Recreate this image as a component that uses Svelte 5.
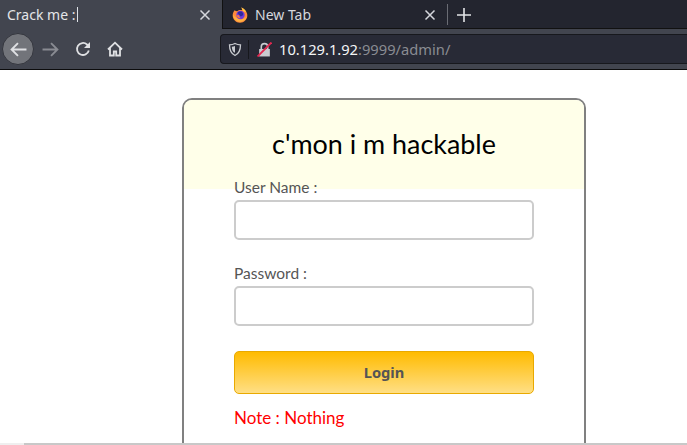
<script lang="ts">
  let username = $state('');
  let password = $state('');
</script>

<div class="window">
  <div class="tabstrip">
    <div class="tab active">
      <span class="tab-title">Crack me :<i class="caret"></i></span>
      <svg class="close" viewBox="0 0 12 12" width="12" height="12"><path d="M1.500 1.500l9 9M10.500 1.500l-9 9" /></svg>
    </div>
    <div class="tab idle">
      <svg class="fox" viewBox="0 0 16 16" width="16" height="16">
        <path d="M2.600 3.200C1.300 4.700.7 6.500.7 8.500c0 4 3.200 7.200 7.300 7.200s7.300-3.200 7.300-7.200c0-1.500-.5-3-1.400-4.200C12.800 2.200 11 1 9.300.4c.7 1 .9 2 .7 2.800C8.500 2.700 6.500 3 5.200 4.200 4.300 4 3.300 3.800 2.600 3.200z" fill="#ff8a3c" />
        <path d="M.9 7.500c.3 4 3.300 7.300 7.100 7.300 3.400 0 6-2.300 6.800-5.500-1.200 2-3.300 3.100-5.500 3-3.400-.1-6.500-2-8.400-4.800z" fill="#ffb23f" />
        <path d="M9.300.4c2.300.8 4 2.300 5 4.300l-2.800-.3C11 3 10 1.500 9.300.4z" fill="#ffcb45" />
        <circle cx="8.500" cy="8" r="4.200" fill="#6e3bd8" />
        <path d="M5.500 6c1.100-1.400 3.100-1.800 4.500-1 1.200.7 1.500 2.200.8 3.300-.6.800-1.800 1.100-2.700.7L5.500 6z" fill="#2f2a9e" />
        <path d="M4.300 7.500c1.200.9 2.300.9 3.100.7-.3 1.100.3 2.500 1.500 2.900-2 .4-4.300-1.200-4.600-3.600z" fill="#ff7a3c" />
      </svg>
      <span class="tab-title">New Tab</span>
      <svg class="close" viewBox="0 0 12 12" width="12" height="12"><path d="M1.500 1.500l9 9M10.500 1.500l-9 9" /></svg>
    </div>
    <div class="divider"></div>
    <svg class="plus" viewBox="0 0 14 14" width="14" height="14"><path d="M7 0v14M0 7h14" /></svg>
  </div>

  <div class="toolbar">
    <div class="nav">
      <button class="back" aria-label="Back">
        <svg viewBox="0 0 16 16" width="17" height="17"><path d="M1.500 8h14M7.500 2L1.500 8l6 6" /></svg>
      </button>
      <svg class="forward" viewBox="0 0 16 16" width="17" height="17"><path d="M.5 8h14M8.500 2l6 6-6 6" /></svg>
      <svg class="reload" viewBox="0 0 16 16" width="16" height="16"><path d="M13.800 9.500A6 6 0 1 1 12 3.500l2 2" /><path class="fill" d="M15 1v6H9z" /></svg>
      <svg class="home" viewBox="0 0 16 16" width="16" height="16"><path d="M1 8.500l7-6.800 7 6.800M3 6.500v8h3.800v-4h2.400v4H13v-8" /></svg>
    </div>
    <div class="urlbar">
      <svg class="shield" viewBox="0 0 14 14" width="14" height="15"><path d="M7 1c2 1 3.500 1.300 5.500 1.300 0 5-1 8.700-5.500 10.700C2.500 11 1.500 7.300 1.500 2.300 3.500 2.300 5 2 7 1z" /><path class="half" d="M7 3.500v6.800C5 9.200 4 7.500 3.800 4.200 5 4.200 6 4 7 3.500z" /></svg>
      <span class="sep"></span>
      <svg class="lock" viewBox="0 0 14 14" width="15" height="15">
        <path class="body" d="M2 6.500h10v7H2z" />
        <path class="shackle" d="M4 6.500V4.500a3 3 0 0 1 6 0v2" />
        <path class="slash" d="M.5 13.500L13.500.5" />
      </svg>
      <span class="url"><b>10.129.1.92</b>:9999/admin/</span>
    </div>
  </div>

  <main class="page">
    <form class="card" onsubmit={(e) => e.preventDefault()}>
      <h1 class="head">c'mon i m hackable</h1>
      <div class="body">
        <label for="user">User Name :</label>
        <input id="user" type="text" bind:value={username} />
        <label class="second" for="pass">Password :</label>
        <input id="pass" type="password" bind:value={password} />
        <button type="submit" class="login">Login</button>
        <p class="note">Note : Nothing</p>
      </div>
    </form>
  </main>
  <div class="scrollbar"><span></span></div>
</div>

<style>
  :global(body) {
    margin: 0;
    background: #fff;
  }

  .window {
    width: 687px;
    height: 445px;
    overflow: hidden;
    display: flex;
    flex-direction: column;
    font-family: Lato, "Open Sans", sans-serif;
  }

  .tabstrip {
    height: 29px;
    flex: none;
    display: flex;
    align-items: center;
    background: linear-gradient(#23252f 28px, #111 28px);
    font-family: "Noto Sans", sans-serif;
    font-size: 14px;
  }

  .tab {
    height: 29px;
    box-sizing: border-box;
    display: flex;
    align-items: center;
  }

  .tab.active {
    width: 222px;
    padding: 0 11px 0 7px;
    background: #42454f;
    color: #e4e5e8;
  }

  .tab.idle {
    width: 225px;
    padding: 0 11px 0 9px;
    color: #d5d7dc;
    border-left: 1px solid #111;
  }

  .tab-title {
    flex: 1;
  }

  .caret {
    display: inline-block;
    width: 1px;
    height: 15px;
    margin-left: 2px;
    vertical-align: -2px;
    background: #dfe3e8;
  }

  .close path {
    fill: none;
    stroke: #d5d7dc;
    stroke-width: 1.500;
  }

  .fox {
    margin-right: 7px;
  }

  .divider {
    width: 1px;
    height: 21px;
    background: #6a6c74;
  }

  .plus {
    margin-left: 9px;
  }

  .plus path {
    fill: none;
    stroke: #e4e5e8;
    stroke-width: 1.600;
  }

  .toolbar {
    height: 41px;
    flex: none;
    box-sizing: border-box;
    display: flex;
    align-items: center;
    background: #42454f;
    border-bottom: 1px solid #0c0c0d;
    padding-left: 2px;
  }

  .nav {
    width: 218px;
    display: flex;
    align-items: center;
  }

  .back {
    width: 32px;
    height: 32px;
    padding: 0;
    display: flex;
    align-items: center;
    justify-content: center;
    background: #72747a;
    border: 1px solid #34363e;
    border-radius: 50%;
  }

  .nav svg path {
    fill: none;
    stroke: #dfe0e3;
    stroke-width: 1.800;
  }

  .forward {
    margin-left: 8px;
    opacity: 0.45;
  }

  .reload {
    margin-left: 16px;
  }

  .nav .reload path.fill {
    fill: #dfe0e3;
    stroke: none;
  }

  .home {
    margin-left: 16px;
  }

  .urlbar {
    flex: 1;
    height: 30px;
    box-sizing: border-box;
    display: flex;
    align-items: center;
    padding-left: 7px;
    background: #282a36;
    border: 1px solid #17181d;
    border-right: 0;
    border-radius: 4px 0 0 4px;
    font-family: "Noto Sans", sans-serif;
    font-size: 14.700px;
    color: #8a8c92;
  }

  .shield path {
    fill: none;
    stroke: #c9cbd0;
    stroke-width: 1.300;
  }

  .shield path.half {
    fill: #c9cbd0;
    stroke: none;
  }

  .sep {
    width: 1px;
    height: 19px;
    margin: 0 8px 0 6px;
    background: #17181d;
  }

  .lock .body {
    fill: #c9cbd0;
  }

  .lock .shackle {
    fill: none;
    stroke: #c9cbd0;
    stroke-width: 1.500;
  }

  .lock .slash {
    fill: none;
    stroke: #e22850;
    stroke-width: 1.800;
  }

  .url {
    margin-left: 7px;
  }

  .url b {
    font-weight: 400;
    color: #f4f5f6;
  }

  .page {
    flex: 1;
    min-height: 0;
    padding: 28px 0 0 182px;
    overflow: hidden;
  }

  .card {
    width: 404px;
    height: 420px;
    box-sizing: border-box;
    border: 2px solid #808080;
    border-radius: 10px;
    overflow: hidden;
  }

  .head {
    height: 89px;
    margin: 0;
    padding-top: 28px;
    box-sizing: border-box;
    background: #ffffe9;
    font-size: 26.900px;
    font-weight: 400;
    line-height: 32px;
    text-align: center;
    color: #000;
  }

  .body {
    display: flex;
    flex-direction: column;
    padding: 0 50px;
    margin-top: -12px;
  }

  label {
    font-size: 15.500px;
    line-height: 20px;
    color: #555;
    position: relative;
  }

  .second {
    margin-top: 23px;
  }

  input {
    height: 40px;
    box-sizing: border-box;
    margin-top: 3px;
    background: #fff;
    border: 2px solid #ccc;
    border-radius: 5px;
  }

  .login {
    height: 43px;
    margin-top: 25px;
    padding-bottom: 3px;
    background: linear-gradient(#ffbb00, #ffdf85);
    border: 1px solid #e9a900;
    border-radius: 5px;
    font-family: "Noto Sans", sans-serif;
    font-size: 14.700px;
    font-weight: 700;
    color: #555;
  }

  .note {
    margin: 13px 0 0;
    font-size: 17px;
    line-height: 22px;
    color: #ff0000;
  }

  .scrollbar {
    height: 2px;
    flex: none;
    background: #c8c8c8;
  }

  .scrollbar span {
    display: block;
    width: 24px;
    height: 2px;
    background: #efefef;
  }
</style>
